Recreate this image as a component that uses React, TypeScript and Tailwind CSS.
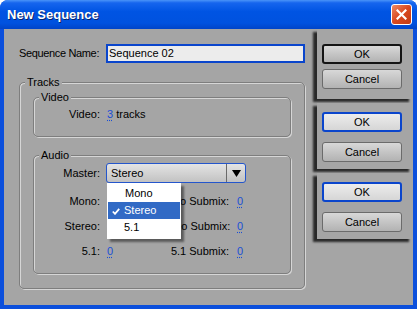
import React from "react";

function Link({ children }: { children: React.ReactNode }) {
  return (
    <span className="text-[#1a4fd6] underline decoration-dotted underline-offset-[2px]">
      {children}
    </span>
  );
}

const btnStyles: Record<string, string> = {
  normal:
    "border border-[#6b6b6b] bg-[linear-gradient(to_bottom,#d8d8d8,#b2b2b2)]",
  def: "border-2 border-[#141414] bg-[linear-gradient(to_bottom,#d8d8d8,#b2b2b2)]",
  focus:
    "border-2 border-[#0a45cc] bg-[linear-gradient(to_bottom,#ececec,#d6d6d6)]",
};

function Btn({ label, variant }: { label: string; variant: string }) {
  return (
    <div
      className={
        "ml-[5px] w-[80px] h-[20px] shrink-0 flex items-center justify-center rounded-[3px] " +
        btnStyles[variant]
      }
    >
      {label}
    </div>
  );
}

function Row({ label, a, b }: { label: string; a: string; b: string }) {
  return (
    <div className="flex items-center h-[15px]">
      <span className="w-[66px] text-right shrink-0">{label}</span>
      <span className="w-[48px] ml-[7px] shrink-0">
        <Link>{a}</Link>
      </span>
      <span className="w-[74px] text-right shrink-0 whitespace-nowrap">{b}</span>
      <span className="ml-[8px]">
        <Link>0</Link>
      </span>
    </div>
  );
}

export default function App() {
  return (
    <div className="w-[417px] h-[309px] flex flex-col bg-[#0b4fdc] rounded-t-[8px] overflow-hidden font-['Liberation_Sans',Arial,sans-serif] text-[11px] leading-[13px] text-black">
      <div className="h-[29px] shrink-0 flex items-center justify-between pl-[7px] pr-[5px] bg-[linear-gradient(to_bottom,#4a94f8_0%,#1665ee_10%,#0054e3_40%,#0052df_80%,#0044c8_100%)]">
        <span className="text-white font-bold text-[13px] leading-[16px] [text-shadow:1px_1px_0_#0a246a]">
          New Sequence
        </span>
        <div className="w-[21px] h-[21px] rounded-[3px] border border-white bg-[linear-gradient(135deg,#ee8a64,#d9481f_50%,#c13a14)] flex items-center justify-center">
          <svg width="11" height="11" viewBox="0 0 11 11">
            <path d="M1.5 1.5 L9.5 9.5 M9.5 1.5 L1.5 9.5" stroke="#fff" strokeWidth="2.2" strokeLinecap="square" />
          </svg>
        </div>
      </div>
      <div className="flex-1 mx-[4px] mb-[4px] bg-[#a5a5a5] flex">
        {/* left column */}
        <div className="w-[301px] shrink-0 pl-[15px] pt-[15px] flex flex-col">
          <div className="flex items-center h-[19px]">
            <span className="w-[87px] shrink-0 tracking-[-0.35px] whitespace-nowrap">Sequence Name:</span>
            <div className="flex-1 h-[19px] border-2 border-[#0a45cc] bg-[#ececec] flex items-center pl-[1px]">
              Sequence 02
            </div>
          </div>
          <fieldset className="mt-[13px] border border-[#7e7e7e] rounded-[5px] shadow-[inset_1px_1px_0_#d6d6d6,1px_1px_0_#d6d6d6]">
            <legend className="ml-[5px] px-[2px] bg-[#a5a5a5]">Tracks</legend>
            <div className="pt-[2px] px-[13px] pb-[14px] flex flex-col">
              <fieldset className="border border-[#7e7e7e] rounded-[5px] shadow-[inset_1px_1px_0_#d6d6d6,1px_1px_0_#d6d6d6]">
                <legend className="ml-[5px] px-[2px] bg-[#a5a5a5]">Video</legend>
                <div className="pt-[3px] pb-[14px]">
                  <div className="flex items-center h-[15px]">
                    <span className="w-[66px] text-right shrink-0">Video:</span>
                    <span className="ml-[7px] whitespace-pre">
                      <Link>3</Link> tracks
                    </span>
                  </div>
                </div>
              </fieldset>
              <fieldset className="mt-[12px] border border-[#7e7e7e] rounded-[5px] shadow-[inset_1px_1px_0_#d6d6d6,1px_1px_0_#d6d6d6]">
                <legend className="ml-[5px] px-[2px] bg-[#a5a5a5]">Audio</legend>
                <div className="pt-[1px] pb-[14px] flex flex-col">
                  <div className="flex items-center h-[20px]">
                    <span className="w-[66px] text-right shrink-0">Master:</span>
                    <div className="relative ml-[6px] w-[140px] h-[20px]">
                      <div className="w-full h-full border border-[#2456cc] rounded-[3px] bg-[linear-gradient(to_bottom,#e4e4e4,#c2c2c2)] flex">
                        <div className="flex-1 flex items-center pl-[4px]">Stereo</div>
                        <div className="w-px bg-[#6a6a6a]" />
                        <div className="w-[18px] flex items-center justify-center">
                          <svg width="9" height="7" viewBox="0 0 9 7">
                            <path d="M0 0 H9 L4.5 7 Z" fill="#000" />
                          </svg>
                        </div>
                      </div>
                      <div className="absolute z-10 left-[1px] top-[20px] w-[74px] h-[56px] bg-white shadow-[3px_3px_2px_rgba(0,0,0,0.45)] pt-[2px] px-[1px]">
                        <div className="h-[17px] flex items-center pl-[17px]">Mono</div>
                        <div className="relative h-[17px] flex items-center pl-[16px] bg-[#316ac5] text-white">
                          <svg className="absolute left-[4px] top-[6px]" width="8" height="7" viewBox="0 0 8 7">
                            <path d="M0.8 3.5 L3 5.8 L7.2 0.8" stroke="#fff" strokeWidth="1.8" fill="none" />
                          </svg>
                          Stereo
                        </div>
                        <div className="h-[17px] flex items-center pl-[16px]">5.1</div>
                      </div>
                    </div>
                  </div>
                  <div className="mt-[11px] flex flex-col gap-[10px]">
                    <Row label="Mono:" a="0" b="Mono Submix:" />
                    <Row label="Stereo:" a="0" b="Stereo Submix:" />
                    <Row label="5.1:" a="0" b="5.1 Submix:" />
                  </div>
                </div>
              </fieldset>
            </div>
          </fieldset>
        </div>
        {/* right column */}
        <div className="flex-1 pl-[12px] flex flex-col">
          <div className="h-[70px] pt-[15px] flex flex-col gap-[5px] bg-[#a5a5a5] shadow-[-4px_3px_2px_rgba(0,0,0,0.75)]">
            <Btn label="OK" variant="def" />
            <Btn label="Cancel" variant="normal" />
          </div>
          <div className="mt-[4px] h-[66px] pt-[9px] flex flex-col gap-[10px] bg-[#a5a5a5] shadow-[-4px_3px_2px_rgba(0,0,0,0.75)]">
            <Btn label="OK" variant="focus" />
            <Btn label="Cancel" variant="normal" />
          </div>
          <div className="mt-[4px] h-[66px] pt-[9px] flex flex-col gap-[10px] bg-[#a5a5a5] shadow-[-4px_3px_2px_rgba(0,0,0,0.75)]">
            <Btn label="OK" variant="focus" />
            <Btn label="Cancel" variant="normal" />
          </div>
        </div>
      </div>
    </div>
  );
}
